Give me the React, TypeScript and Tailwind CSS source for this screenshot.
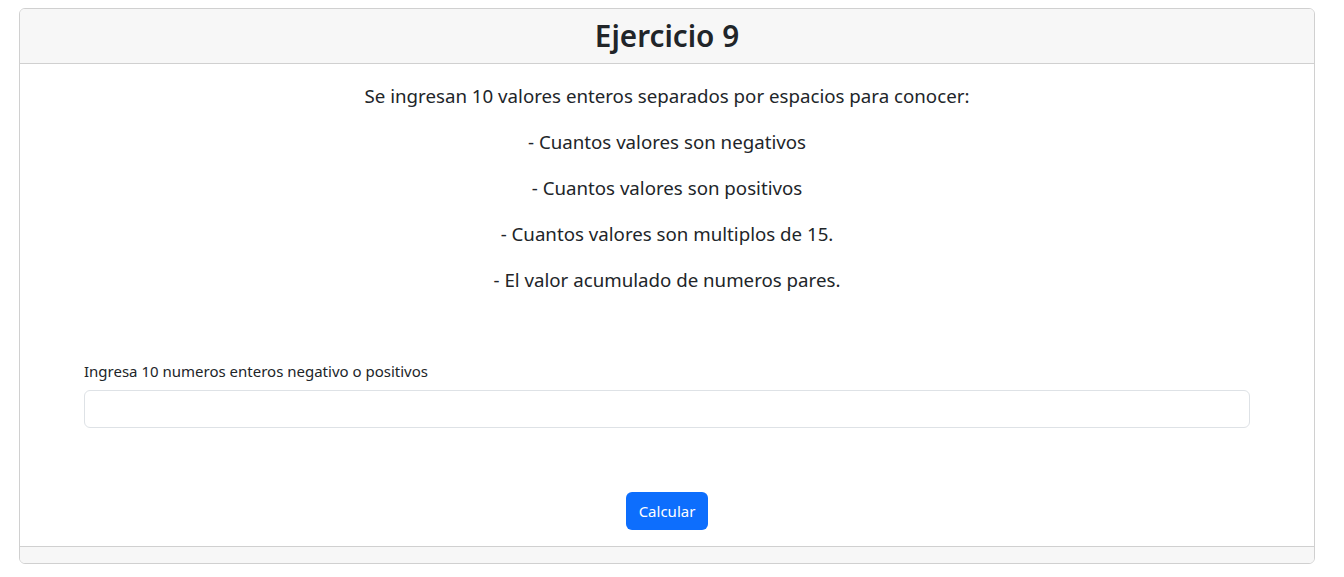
const items = [
  "Se ingresan 10 valores enteros separados por espacios para conocer:",
  "- Cuantos valores son negativos",
  "- Cuantos valores son positivos",
  "- Cuantos valores son multiplos de 15.",
  "- El valor acumulado de numeros pares.",
];

export default function App() {
  return (
    <div className="min-h-[577px] bg-white pt-[8px] font-['Noto_Sans',sans-serif] text-[#212529]">
      <div className="ml-[19px] w-[1296px] overflow-hidden rounded-[6px] border border-[#d0d0d0]">
        <div className="border-b border-[#d0d0d0] bg-[#f7f7f7] px-4 py-2 text-center">
          <h2 className="text-[29.7px] leading-[38px] font-semibold">Ejercicio 9</h2>
        </div>
        <div className="px-4 pt-[17px] pb-4">
          {items.map((t) => (
            <p key={t} className="mb-4 text-center text-[18.7px] leading-[30px]">
              {t}
            </p>
          ))}
          <div className="mt-[64px] px-[48px]">
            <label className="mb-[7px] block text-[15px] leading-[24px]">
              Ingresa 10 numeros enteros negativo o positivos
            </label>
            <input
              type="text"
              className="block h-[38px] w-full rounded-[6px] border border-[#dee2e6] px-3 outline-none"
            />
          </div>
          <div className="mt-[64px] flex justify-center">
            <button className="h-[38px] rounded-[6px] bg-[#0d6efd] px-[13px] text-[15px] text-white">
              Calcular
            </button>
          </div>
        </div>
        <div className="h-[17px] border-t border-[#d0d0d0] bg-[#f7f7f7]" />
      </div>
    </div>
  );
}
